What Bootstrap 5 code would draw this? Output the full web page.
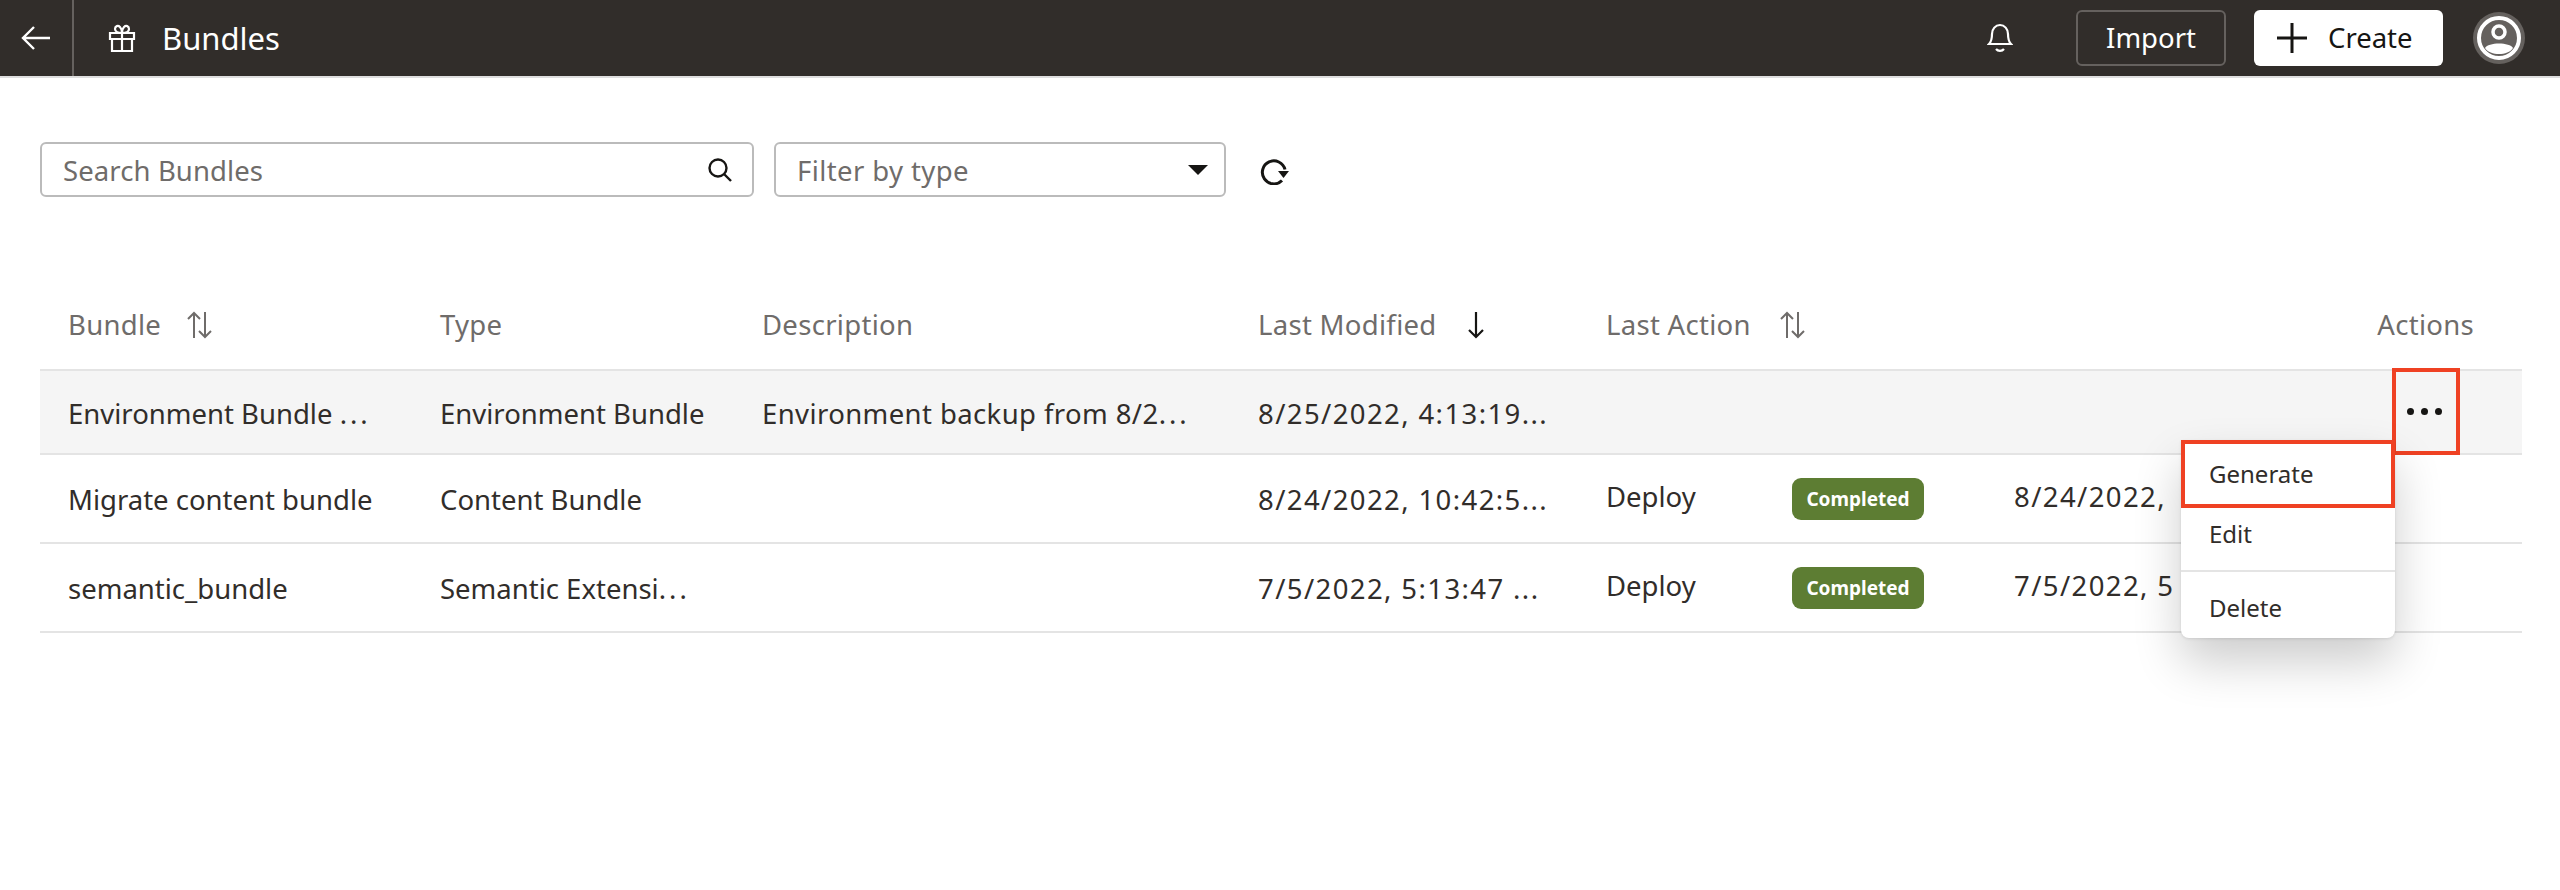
<!DOCTYPE html>
<html lang="en">
<head>
    <meta charset="UTF-8">
    <meta name="viewport" content="width=device-width, initial-scale=1.0">
    <title>Bundles</title>
    <link rel="stylesheet" href="https://cdn.jsdelivr.net/npm/bootstrap@5.3.0/dist/css/bootstrap.min.css">
    <style>
        body {
            background: #fff;
            color: #312d2a;
            font-family: "Noto Sans", "Open Sans", sans-serif;
            font-size: 27.5px;
        }
        .top-bar {
            height: 78px;
            padding: 0;
            background: #312d2a;
            border-bottom: 2px solid #dedede;
            color: #fff;
        }
        .back-cell {
            width: 74px;
            height: 76px;
            border-right: 2px solid #65615e;
        }
        .page-name {
            font-size: 31px;
            margin-left: 26px;
        }
        .gift-icon { margin-left: 34px; }
        .bar-btn {
            height: 56px;
            border-radius: 6px;
            font-size: 27.5px;
            display: flex;
            align-items: center;
            justify-content: center;
            padding: 0;
        }
        .import-btn {
            width: 150px;
            color: #fff;
            border: 2px solid #65615e;
            margin-left: 63px;
        }
        .create-btn {
            width: 189px;
            gap: 21px;
            background: #fff;
            color: #161513;
            border: 0;
            margin-left: 28px;
            justify-content: flex-start;
            padding-left: 23px;
        }
        .avatar-wrap { margin-left: 30px; margin-right: 35px; }
        .tool-row {
            padding: 64px 0 0 40px;
            height: 197px;
        }
        .search-box {
            width: 714px;
            height: 55px;
            border: 2px solid #bbb;
            border-radius: 6px;
            padding: 0 20px 0 21px;
        }
        .search-box input {
            border: 0;
            outline: 0;
            padding: 2px 0 0;
            flex: 1;
            font-size: 27.5px;
            letter-spacing: .1px;
            color: #6f6c6a;
            background: transparent;
        }
        .search-box input::placeholder { color: #6f6c6a; opacity: 1; }
        .type-select {
            width: 452px;
            height: 55px;
            margin-left: 20px;
            padding: 2px 0 0 21px;
            font-size: 27.5px;
            letter-spacing: .4px;
            color: #6f6c6a;
            border: 2px solid #bbb;
            border-radius: 6px;
            background-size: 20px 10px;
            background-position: right 16px center;
            background-image: url("data:image/svg+xml,%3Csvg xmlns='http://www.w3.org/2000/svg' viewBox='0 0 20 10'%3E%3Cpath d='M0 0h20L10 10z' fill='%23161513'/%3E%3C/svg%3E");
        }
        .refresh-icon { margin-left: 34px; }
        .table-wrap {
            margin: 5px 38px 0 40px;
            position: relative;
        }
        .bundle-table {
            table-layout: fixed;
            width: 2482px;
            margin: 0;
            --bs-table-color: #312d2a;
            --bs-table-bg: transparent;
        }
        .bundle-table th, .bundle-table td {
            padding: 3px 0 0 28px;
            vertical-align: middle;
            white-space: nowrap;
            border-bottom: 2px solid #e4e4e4;
            font-weight: 400;
        }
        .bundle-table thead th {
            height: 90px;
            padding-top: 0;
            color: #6f6c6a;
            letter-spacing: .3px;
            border-bottom: 2px solid #e4e4e4;
        }
        .bundle-table tbody tr { height: 89px; }
        .bundle-table tbody tr.picked { height: 84px; }
        .bundle-table tbody tr.picked td { background: #f5f5f5; }
        .sort-icon { margin-left: 25px; vertical-align: -4px; }
        .sort-down { margin-left: 30px; }
        .sort-last { margin-left: 28px; }
        .date-text { letter-spacing: 1.400px; }
        .desc-text { letter-spacing: .4px; }
        .cut-dots { letter-spacing: 3px; }
        .done-tag {
            background: #5d7d33;
            color: #fff;
            width: 132px;
            height: 42px;
            line-height: 42px;
            padding: 0;
            border-radius: 9px;
            font-size: 19px;
            font-weight: 700;
            letter-spacing: 0;
            vertical-align: middle;
        }
        .last-cell span { display: inline-block; }
        .last-name { width: 186px; }
        .last-tag { width: 222px; }
        .last-cell { position: relative; top: -2px; }
        .bundle-table thead th.actions-head { text-align: right; padding: 0 48px 0 0; }
        .red-frame {
            position: absolute;
            border: 4px solid #ef4123;
            pointer-events: none;
        }
        .dots-frame {
            left: 2352px;
            top: 88px;
            width: 68px;
            height: 87px;
            padding-right: 4px;
            display: flex;
            align-items: center;
            justify-content: center;
            gap: 7px;
        }
        .dots-frame i {
            width: 7px;
            height: 7px;
            border-radius: 50%;
            background: #161513;
        }
        .row-menu {
            position: absolute;
            display: block;
            left: 2141px;
            top: 160px;
            width: 214px;
            height: 198px;
            min-width: 0;
            padding: 0;
            border: 0;
            border-radius: 0 0 8px 8px;
            font-size: 24px;
            color: #312d2a;
            box-shadow: 0 24px 48px rgba(0, 0, 0, .2), 0 1px 3px rgba(0, 0, 0, .1);
        }
        .row-menu .dropdown-item {
            padding: 0 0 0 28px;
            color: #312d2a;
            display: flex;
            align-items: center;
        }
        .row-menu .item-gen { height: 68px; border: 4px solid #ef4123; padding-left: 24px; }
        .row-menu .item-edit { height: 62px; padding-bottom: 10px; }
        .row-menu .item-del { height: 66px; padding-top: 6px; }
        .row-menu .dropdown-divider { margin: 0; border-top: 2px solid #e4e4e4; opacity: 1; }
    </style>
</head>
<body class="min-vh-100">

    <nav class="navbar top-bar d-flex align-items-center flex-nowrap">
        <div class="back-cell d-flex align-items-center justify-content-center">
            <svg width="30" height="26" viewBox="0 0 30 26" fill="none" stroke="#fff" stroke-width="2.4"><path d="M29 13H2M13 2 2 13l11 11"/></svg>
        </div>
        <svg class="gift-icon" width="28" height="28" viewBox="0 0 28 28" fill="none" stroke="#fff" stroke-width="2.2"><path d="M2 9h24v6H2zM4 15h20v12H4zM14 9v18M14 9c-3 0-7-1-7-4s3-4 5-2 2 6 2 6zm0 0c3 0 7-1 7-4s-3-4-5-2-2 6-2 6z"/></svg>
        <span class="page-name">Bundles</span>
        <div class="d-flex align-items-center ms-auto">
            <svg width="26" height="30" viewBox="0 0 26 30" fill="none" stroke="#fff" stroke-width="2.2"><path d="M2 21h22c-3-3-3-6-3-10 0-5-3.500-9-8-9S5 6 5 11c0 4 0 7-3 10zM9 26c2 2.500 6 2.500 8 0"/></svg>
            <button class="btn bar-btn import-btn">Import</button>
            <button class="btn bar-btn create-btn">
                <svg width="30" height="30" viewBox="0 0 30 30" stroke="#161513" stroke-width="3"><path d="M15 0v30M0 15h30"/></svg>
                Create
            </button>
            <div class="avatar-wrap">
                <svg class="d-block" width="52" height="52" viewBox="0 0 52 52" fill="none"><circle cx="26" cy="26" r="26" fill="#65615e"/><circle cx="26" cy="26" r="20" stroke="#fff" stroke-width="4"/><circle cx="26" cy="20" r="6" stroke="#fff" stroke-width="3.500"/><path d="M12 36c3-6 25-6 28 0-5 8-23 8-28 0z" fill="#fff"/></svg>
            </div>
        </div>
    </nav>

    <div class="tool-row d-flex align-items-start">
        <div class="search-box d-flex align-items-center">
            <input type="text" placeholder="Search Bundles">
            <svg width="24" height="24" viewBox="0 0 24 24" fill="none" stroke="#161513" stroke-width="2.400"><circle cx="10" cy="10" r="8.500"/><path d="m16 16 7 7"/></svg>
        </div>
        <select class="form-select type-select">
            <option>Filter by type</option>
        </select>
        <svg class="refresh-icon mt-3" width="30" height="27" viewBox="0 0 30 27" fill="none" stroke="#161513" stroke-width="3"><path d="M22 22.500a11.500 11.500 0 1 1 3-11"/><path d="M18 13h11l-5.500 7z" fill="#161513" stroke="none"/></svg>
    </div>

    <div class="table-wrap">
        <table class="table bundle-table">
            <colgroup>
                <col style="width:372px"><col style="width:322px"><col style="width:496px"><col style="width:348px"><col><col style="width:160px">
            </colgroup>
            <thead>
                <tr>
                    <th>Bundle<svg class="sort-icon" width="26" height="28" viewBox="0 0 26 28" fill="none" stroke="#6f6c6a" stroke-width="2"><path d="M8 27V2M2 8l6-6 6 6M19 1v25M13 20l6 6 6-6"/></svg></th>
                    <th>Type</th>
                    <th>Description</th>
                    <th>Last Modified<svg class="sort-icon sort-down" width="18" height="28" viewBox="0 0 18 28" fill="none" stroke="#161513" stroke-width="2.200"><path d="M9 1v25M2 19l7 7 7-7"/></svg></th>
                    <th>Last Action<svg class="sort-icon sort-last" width="26" height="28" viewBox="0 0 26 28" fill="none" stroke="#6f6c6a" stroke-width="2"><path d="M8 27V2M2 8l6-6 6 6M19 1v25M13 20l6 6 6-6"/></svg></th>
                    <th class="actions-head">Actions</th>
                </tr>
            </thead>
            <tbody>
                <tr class="picked">
                    <td>Environment Bundle <span class="cut-dots">...</span></td>
                    <td>Environment Bundle</td>
                    <td class="desc-text">Environment backup from 8/2<span class="cut-dots">...</span></td>
                    <td class="date-text">8/25/2022, 4:13:19...</td>
                    <td></td>
                    <td></td>
                </tr>
                <tr>
                    <td>Migrate content bundle</td>
                    <td>Content Bundle</td>
                    <td></td>
                    <td class="date-text">8/24/2022, 10:42:5...</td>
                    <td><div class="last-cell"><span class="last-name">Deploy</span><span class="last-tag"><span class="badge done-tag">Completed</span></span><span class="date-text">8/24/2022,</span></div></td>
                    <td></td>
                </tr>
                <tr>
                    <td>semantic_bundle</td>
                    <td>Semantic Extensi<span class="cut-dots">...</span></td>
                    <td></td>
                    <td class="date-text">7/5/2022, 5:13:47 ...</td>
                    <td><div class="last-cell"><span class="last-name">Deploy</span><span class="last-tag"><span class="badge done-tag">Completed</span></span><span class="date-text">7/5/2022, 5</span></div></td>
                    <td></td>
                </tr>
            </tbody>
        </table>

        <div class="red-frame dots-frame"><i></i><i></i><i></i></div>

        <div class="dropdown-menu row-menu">
            <a class="dropdown-item item-gen" href="#">Generate</a>
            <a class="dropdown-item item-edit" href="#">Edit</a>
            <hr class="dropdown-divider">
            <a class="dropdown-item item-del" href="#">Delete</a>
        </div>
    </div>

    <script src="https://cdn.jsdelivr.net/npm/bootstrap@5.3.0/dist/js/bootstrap.bundle.min.js"></script>
</body>
</html>
